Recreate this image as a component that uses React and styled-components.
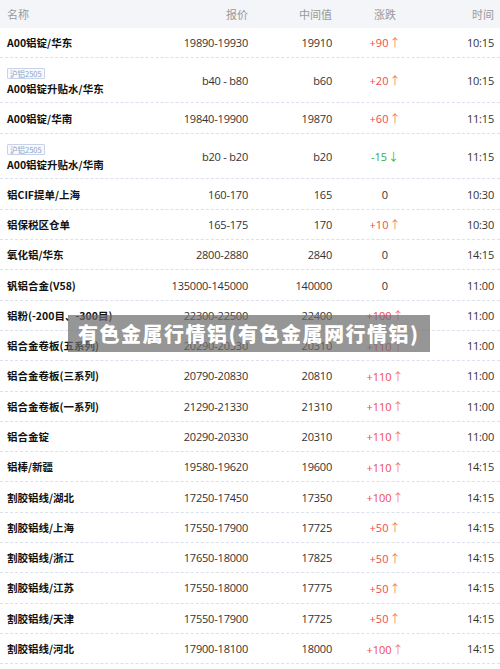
import React from 'react';
import styled, { createGlobalStyle } from 'styled-components';

const GlobalStyle = createGlobalStyle`
  html, body {
    margin: 0;
    padding: 0;
    background: #ffffff;
  }
  body {
    font-family: "Noto Sans CJK SC", "Noto Sans", sans-serif;
    color: #333;
  }
`;

const rows = [
  { name: 'A00铝锭/华东', price: '19890-19930', mid: '19910', change: 90, time: '10:15' },
  { name: 'A00铝锭升贴水/华东', tag: '沪铝2505', price: 'b40 - b80', mid: 'b60', change: 20, time: '10:15' },
  { name: 'A00铝锭/华南', price: '19840-19900', mid: '19870', change: 60, time: '11:15' },
  { name: 'A00铝锭升贴水/华南', tag: '沪铝2505', price: 'b20 - b20', mid: 'b20', change: -15, time: '11:15' },
  { name: '铝CIF提单/上海', price: '160-170', mid: '165', change: 0, time: '10:30' },
  { name: '铝保税区仓单', price: '165-175', mid: '170', change: 10, time: '10:30' },
  { name: '氧化铝/华东', price: '2800-2880', mid: '2840', change: 0, time: '14:15' },
  { name: '钒铝合金(V58)', price: '135000-145000', mid: '140000', change: 0, time: '11:00' },
  { name: '铝粉(-200目、-300目)', price: '22300-22500', mid: '22400', change: 100, time: '11:00' },
  { name: '铝合金卷板(五系列)', price: '20290-20330', mid: '20310', change: 110, time: '11:00' },
  { name: '铝合金卷板(三系列)', price: '20790-20830', mid: '20810', change: 110, time: '11:00' },
  { name: '铝合金卷板(一系列)', price: '21290-21330', mid: '21310', change: 110, time: '11:00' },
  { name: '铝合金锭', price: '20290-20330', mid: '20310', change: 110, time: '11:00' },
  { name: '铝棒/新疆', price: '19580-19620', mid: '19600', change: 110, time: '14:15' },
  { name: '割胶铝线/湖北', price: '17250-17450', mid: '17350', change: 100, time: '14:15' },
  { name: '割胶铝线/上海', price: '17550-17900', mid: '17725', change: 50, time: '14:15' },
  { name: '割胶铝线/浙江', price: '17650-18000', mid: '17825', change: 50, time: '14:15' },
  { name: '割胶铝线/江苏', price: '17550-18000', mid: '17775', change: 50, time: '14:15' },
  { name: '割胶铝线/天津', price: '17550-17900', mid: '17725', change: 50, time: '14:15' },
  { name: '割胶铝线/河北', price: '17900-18100', mid: '18000', change: 100, time: '14:15' },
];

const Page = styled.div`
  position: relative;
  width: 500px;
  height: 669px;
  overflow: hidden;
`;

const Grid = styled.div`
  display: grid;
  grid-template-columns: 130px 118px 84px 106px 56px;
  padding-right: 6px;
`;

const HeaderRow = styled(Grid)`
  height: 27.5px;
  align-items: center;
  background: #f3f5f9;
  color: #999;
  font-size: 11px;
`;

const Row = styled(Grid)`
  height: ${(p) => (p.$tall ? '44.7px' : '29.3px')};
  align-items: center;
  border-bottom: 1px dashed #dbe1ec;
  font-size: 11px;
`;

const Cell = styled.div`
  text-align: ${(p) => p.$align || 'right'};
  padding-left: ${(p) => (p.$first ? '7px' : '0')};
  white-space: nowrap;
  font-family: ${(p) => (p.$num ? '"Open Sans", "Noto Sans CJK SC", sans-serif' : 'inherit')};
  letter-spacing: ${(p) => (p.$num ? '-0.2px' : '0')};
`;

const NameCell = styled.div`
  padding-left: 7px;
  display: flex;
  flex-direction: column;
  align-items: flex-start;
  gap: 2px;
  white-space: nowrap;
`;

const Name = styled.span`
  font-weight: 700;
  font-size: 10.5px;
  color: #111;
`;

const Tag = styled.span`
  font-size: 7.5px;
  line-height: 9px;
  padding: 0 2px;
  color: #8ea2c6;
  border: 1px solid #c7d3e8;
  border-radius: 1px;
  background: #f6f9fd;
  margin-top: 4px;
`;

const Change = styled.div`
  text-align: center;
  font-family: "Open Sans", "Noto Sans CJK SC", sans-serif;
  color: ${(p) => (p.$dir > 0 ? '#f04a4a' : p.$dir < 0 ? '#3aaa3f' : '#333')};
`;

const Arrow = styled.span`
  color: ${(p) => (p.$dir > 0 ? '#f57c5c' : '#4aae3c')};
  font-size: 11px;
  margin-left: 1px;
`;

const Overlay = styled.div`
  position: absolute;
  left: 68px;
  top: 315px;
  width: 362px;
  height: 37px;
  background: rgba(110, 110, 110, 0.72);
  color: #fff;
  display: flex;
  align-items: center;
  padding-left: 10px;
  box-sizing: border-box;
  font-size: 20px;
  font-weight: 900;
  letter-spacing: 1.5px;
  white-space: nowrap;
`;

const fmt = (c) => (c > 0 ? `+${c}` : `${c}`);

export default function App() {
  return (
    <Page>
      <GlobalStyle />
      <HeaderRow>
        <Cell $align="left" $first>名称</Cell>
        <Cell>报价</Cell>
        <Cell>中间值</Cell>
        <Cell $align="center">涨跌</Cell>
        <Cell>时间</Cell>
      </HeaderRow>
      {rows.map((r, i) => (
        <Row key={i} $tall={!!r.tag}>
          <NameCell>
            {r.tag && <Tag>{r.tag}</Tag>}
            <Name>{r.name}</Name>
          </NameCell>
          <Cell $num>{r.price}</Cell>
          <Cell $num>{r.mid}</Cell>
          <Change $dir={r.change}>
            {fmt(r.change)}
            {r.change !== 0 && <Arrow $dir={r.change}>{r.change > 0 ? '↑' : '↓'}</Arrow>}
          </Change>
          <Cell $num>{r.time}</Cell>
        </Row>
      ))}
      <Overlay>有色金属行情铝(有色金属网行情铝)</Overlay>
    </Page>
  );
}
